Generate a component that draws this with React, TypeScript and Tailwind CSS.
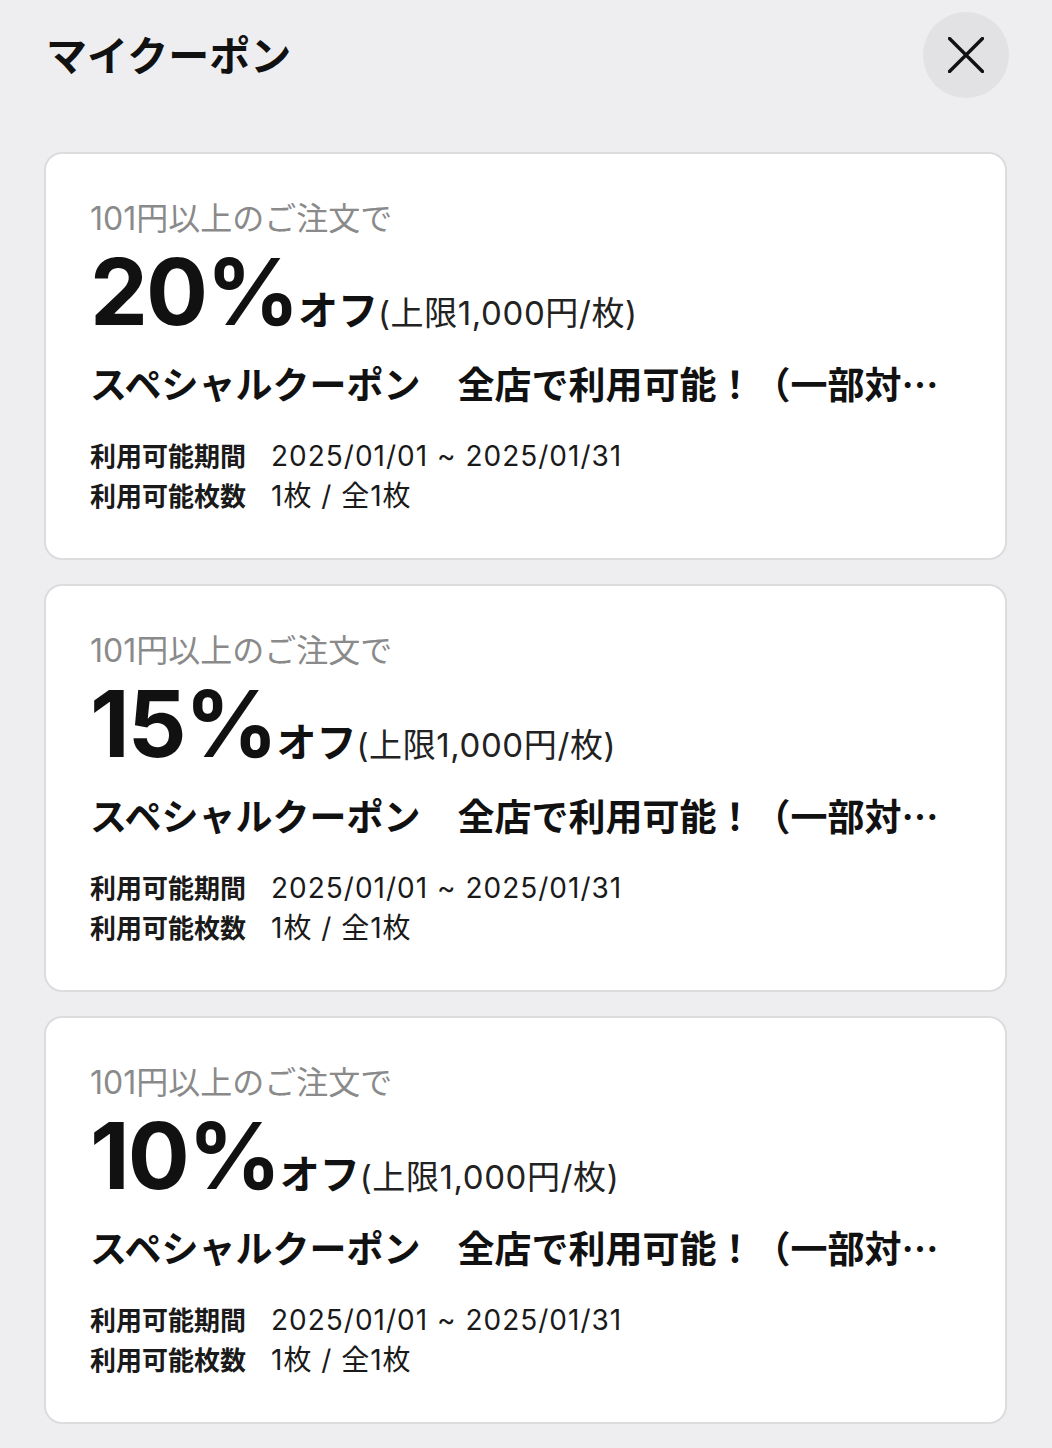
import React from "react";

type Coupon = {
  id: number;
  percent: number;
};

const coupons: Coupon[] = [
  { id: 1, percent: 20 },
  { id: 2, percent: 15 },
  { id: 3, percent: 10 },
];

function CloseIcon() {
  return (
    <svg width="36" height="36" viewBox="0 0 36 36" fill="none" aria-hidden="true">
      <path d="M1.5 1.5 L34.5 34.5 M34.5 1.5 L1.5 34.5" stroke="#111" strokeWidth="3.4" strokeLinecap="round" />
    </svg>
  );
}

function CouponCard({ coupon }: { coupon: Coupon }) {
  return (
    <div className="rounded-[18px] border-2 border-[#dcdcde] bg-white pl-[44px] pr-[44px] pt-[44px] pb-[42px]">
      <p className="text-[32px] leading-[42px] text-[#8a8a8a]">101円以上のご注文で</p>
      <div className="mt-[6px] flex h-[92px] items-baseline leading-none">
        <span className="text-[92px] font-bold leading-[92px] tracking-[-0.02em] text-[#111]">{coupon.percent}%</span>
        <span className="text-[40px] font-bold text-[#111]">オフ</span>
        <span className="text-[33px] tracking-[0.6px] text-[#222]">(上限1,000円/枚)</span>
      </div>
      <p className="mt-[21px] truncate font-['Noto_Sans_CJK_JP',sans-serif] text-[37px] font-bold leading-[48px] text-[#111]">
        スペシャルクーポン　全店で利用可能！（一部対象外）
      </p>
      <div className="mt-[29px] text-[#1a1a1a]">
        <div className="flex h-[40px] items-center">
          <span className="w-[181px] text-[26px] font-bold">利用可能期間</span>
          <span className="text-[28px] tracking-[1px]">2025/01/01 ~ 2025/01/31</span>
        </div>
        <div className="flex h-[40px] items-center">
          <span className="w-[181px] text-[26px] font-bold">利用可能枚数</span>
          <span className="text-[28px] tracking-[1px]">1枚 / 全1枚</span>
        </div>
      </div>
    </div>
  );
}

export default function App() {
  return (
    <div className="min-h-[1448px] w-[1052px] bg-[#eeeef0] font-['Inter','Noto_Sans_CJK_JP',sans-serif]">
      <header className="flex items-start justify-between pl-[46px] pr-[43px] pt-[12px]">
        <h1 className="mt-[16px] text-[41px] font-bold leading-[56px] text-[#111]">マイクーポン</h1>
        <button
          type="button"
          aria-label="閉じる"
          className="flex h-[86px] w-[86px] items-center justify-center rounded-full bg-[#e2e2e4]"
        >
          <CloseIcon />
        </button>
      </header>
      <main className="mt-[54px] flex flex-col gap-[24px] pl-[44px] pr-[45px] pb-[22px]">
        {coupons.map((c) => (
          <CouponCard key={c.id} coupon={c} />
        ))}
      </main>
    </div>
  );
}
